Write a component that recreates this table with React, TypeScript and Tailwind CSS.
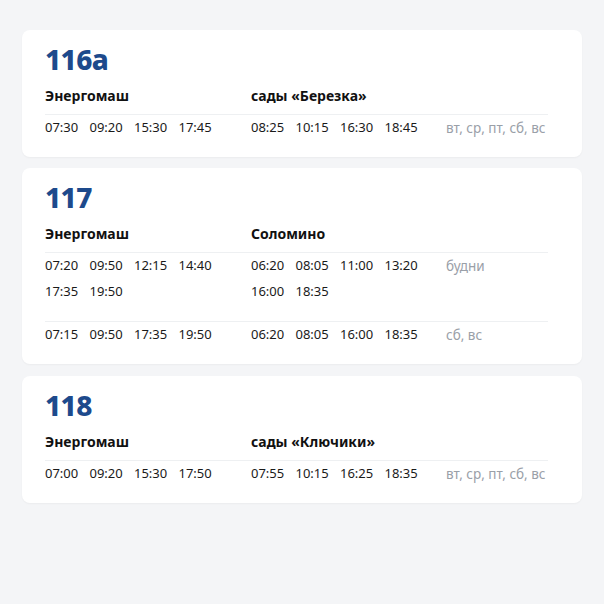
const font = { fontFamily: '"Noto Sans", "Open Sans", sans-serif' };

type Group = { from: string[][]; to: string[][]; days: string };
type Route = { num: string; from: string; to: string; groups: Group[]; gap: string };

const routes: Route[] = [
  {
    num: '116а',
    from: 'Энергомаш',
    to: 'сады «Березка»',
    gap: 'mt-0',
    groups: [
      {
        from: [['07:30', '09:20', '15:30', '17:45']],
        to: [['08:25', '10:15', '16:30', '18:45']],
        days: 'вт, ср, пт, сб, вс',
      },
    ],
  },
  {
    num: '117',
    from: 'Энергомаш',
    to: 'Соломино',
    gap: 'mt-[11px]',
    groups: [
      {
        from: [
          ['07:20', '09:50', '12:15', '14:40'],
          ['17:35', '19:50'],
        ],
        to: [
          ['06:20', '08:05', '11:00', '13:20'],
          ['16:00', '18:35'],
        ],
        days: 'будни',
      },
      {
        from: [['07:15', '09:50', '17:35', '19:50']],
        to: [['06:20', '08:05', '16:00', '18:35']],
        days: 'сб, вс',
      },
    ],
  },
  {
    num: '118',
    from: 'Энергомаш',
    to: 'сады «Ключики»',
    gap: 'mt-[12px]',
    groups: [
      {
        from: [['07:00', '09:20', '15:30', '17:50']],
        to: [['07:55', '10:15', '16:25', '18:35']],
        days: 'вт, ср, пт, сб, вс',
      },
    ],
  },
];

function Times({ rows }: { rows: string[][] }) {
  return (
    <div>
      {rows.map((r, i) => (
        <div key={i} className="flex h-[26px] items-center">
          {r.map((t) => (
            <span key={t} className="w-[44.5px] shrink-0">
              {t}
            </span>
          ))}
        </div>
      ))}
    </div>
  );
}

function RouteCard({ route }: { route: Route }) {
  return (
    <div
      className={`${route.gap} rounded-lg bg-white pl-[23px] pr-[34px] pt-[12px] shadow-[0_1px_2px_rgba(0,0,0,0.04)]`}
    >
      <div className="text-[28px] font-extrabold leading-[34px] tracking-[-0.6px] text-[#1d4a8c]">{route.num}</div>
      <div className="mt-[10px] grid grid-cols-[206px_195px_1fr] text-[14px] font-bold leading-[20px] text-[#111]">
        <div>{route.from}</div>
        <div>{route.to}</div>
        <div />
      </div>
      <div className="mt-[8px]">
        {route.groups.map((g, i) => (
          <div
            key={i}
            className="grid grid-cols-[206px_195px_1fr] border-t border-[#eef0f2] pb-[16px] text-[13px] text-[#1a1a1a]"
          >
            <Times rows={g.from} />
            <Times rows={g.to} />
            <div className="flex h-[26px] items-center text-[13.5px] text-[#9aa0a8]">{g.days}</div>
          </div>
        ))}
      </div>
    </div>
  );
}

export default function App() {
  return (
    <div className="min-h-[604px] w-[604px] bg-[#f4f5f7] px-[22px] pt-[30px]" style={font}>
      <div className="flex flex-col">
        {routes.map((r) => (
          <RouteCard key={r.num} route={r} />
        ))}
      </div>
    </div>
  );
}
